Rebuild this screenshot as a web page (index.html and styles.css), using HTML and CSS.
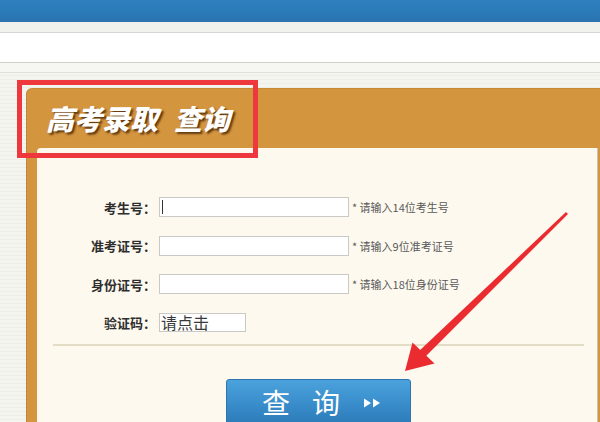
FILE: index.html
```html
<!DOCTYPE html>
<html lang="zh-CN">
<head>
<meta charset="utf-8">
<title>高考录取查询</title>
<link rel="stylesheet" href="styles.css">
</head>
<body>
<div class="page">
  <div class="topbar"></div>
  <div class="strip"></div>
  <div class="whitebar"></div>
  <div class="strip2"></div>
  <div class="content">
    <div class="panel">
      <div class="panel-head">
        <h1 class="title"><span>高考录取</span><span class="title-2">查询</span></h1>
      </div>
      <div class="panel-body">
        <div class="row">
          <label class="label">考生号：</label>
          <div class="field"><span class="caret"></span></div>
          <span class="hint">* 请输入14位考生号</span>
        </div>
        <div class="row">
          <label class="label">准考证号：</label>
          <div class="field"></div>
          <span class="hint">* 请输入9位准考证号</span>
        </div>
        <div class="row">
          <label class="label">身份证号：</label>
          <div class="field"></div>
          <span class="hint">* 请输入18位身份证号</span>
        </div>
        <div class="row row-code">
          <label class="label">验证码：</label>
          <div class="field field-code">请点击</div>
        </div>
        <div class="separator"></div>
        <div class="btn">
          <span class="btn-char">查</span><span class="btn-char btn-char-2">询</span>
          <svg class="btn-arrows" width="18" height="12" viewBox="0 0 18 12"><path d="M1 1.5 L8 6 L1 10.5 Z M10 1.5 L17 6 L10 10.5 Z" fill="#ffffff"/></svg>
        </div>
      </div>
    </div>
  </div>
  <div class="redbox"></div>
  <svg class="arrow" width="600" height="422" viewBox="0 0 600 422">
    <polygon points="568,214 566,212 417,353 423,359" fill="#ea2b30"/>
    <polygon points="405,371 412.5,342.5 434.5,363.5" fill="#ea2b30"/>
  </svg>
</div>
</body>
</html>
```
FILE: styles.css
```css
html, body {
  margin: 0;
  padding: 0;
}
body {
  width: 600px;
  height: 422px;
  overflow: hidden;
  font-family: "Noto Sans CJK SC", "Noto Sans", "Liberation Sans", sans-serif;
  background: #f4f4ef;
}
.page {
  position: relative;
  width: 600px;
  height: 422px;
  overflow: hidden;
  background: repeating-linear-gradient(180deg, #f5f5f0 0px, #f5f5f0 3px, #eeeee8 3px, #eeeee8 4px);
}
.topbar {
  height: 22px;
  background: linear-gradient(180deg, #2f80bf 0%, #2a78b6 70%, #2b73ad 100%);
}
.strip {
  height: 10px;
  background: #f1f1ed;
  border-bottom: 1px solid #d6d6d3;
}
.whitebar {
  height: 29px;
  background: #ffffff;
  border-bottom: 1px solid #cfcfcc;
}
.strip2 {
  height: 9px;
  background: #f6f6f2;
  border-bottom: 1px solid #e0e0db;
}
.content {
  padding: 15px 0 0 27px;
}
.panel {
  background: #d4953f;
  border-top-left-radius: 6px;
  padding: 0 2px 0 10px;
  width: 561px;
  height: 340px;
  border-top: 1px solid #c98a35;
  border-left: 1px solid #c2843a;
  margin-left: -1px;
}
.panel-head {
  height: 59px;
  display: flex;
  align-items: center;
  margin-left: -10px;
  padding-left: 19px;
}
.title {
  margin: 0;
  font-size: 28px;
  line-height: 1;
  font-weight: 900;
  font-style: italic;
  color: #ffffff;
  text-shadow: 2px 2px 2px rgba(70, 35, 0, 0.8);
  display: flex;
  margin-top: -1px;
}
.title-2 {
  margin-left: 16px;
}
.panel-body {
  background: #fdf9ee;
  border-top-left-radius: 4px;
  border-right: 1px solid #cdc4ad;
  padding-top: 49px;
  box-sizing: border-box;
  height: 290px;
}
.row {
  display: flex;
  align-items: center;
  height: 20px;
  margin-bottom: 18.5px;
}
.label {
  width: 119px;
  text-align: right;
  font-size: 13px;
  font-weight: 700;
  color: #2e2e2e;
  margin-right: 3px;
  white-space: nowrap;
}
.field {
  width: 188px;
  height: 18px;
  background: #ffffff;
  border: 1px solid #c9c9c6;
  display: flex;
  align-items: center;
}
.caret {
  display: block;
  width: 1px;
  height: 14px;
  background: #333333;
  margin-left: 2px;
}
.hint {
  margin-left: 3px;
  font-size: 11px;
  color: #5a5a5a;
  white-space: nowrap;
}
.row-code {
  height: 19px;
  margin-bottom: 12.5px;
}
.field-code {
  width: 84px;
  height: 17px;
  font-size: 16px;
  color: #3a3a3a;
  padding-left: 1px;
  line-height: 17px;
}
.separator {
  margin: 0 13px 0 16px;
  border-top: 2px solid #e3ddc6;
}
.btn {
  margin: 33px 0 0 189px;
  width: 185px;
  height: 46px;
  border: 1px solid #2f75ad;
  border-radius: 3px;
  background: linear-gradient(180deg, #4ba2dc 0%, #3a8fcc 50%, #2c7bb9 100%);
  display: flex;
  align-items: center;
  padding-left: 35px;
  box-sizing: border-box;
}
.btn-char {
  font-size: 28px;
  line-height: 1;
  color: #ffffff;
  font-weight: 400;
}
.btn-char-2 {
  margin-left: 22px;
}
.btn-arrows {
  margin-left: 23px;
  margin-top: 2px;
}
.redbox {
  position: absolute;
  left: 17px;
  top: 80px;
  width: 231px;
  height: 68px;
  border: 5px solid #ef383d;
}
.arrow {
  position: absolute;
  left: 0;
  top: 0;
  pointer-events: none;
}
```
